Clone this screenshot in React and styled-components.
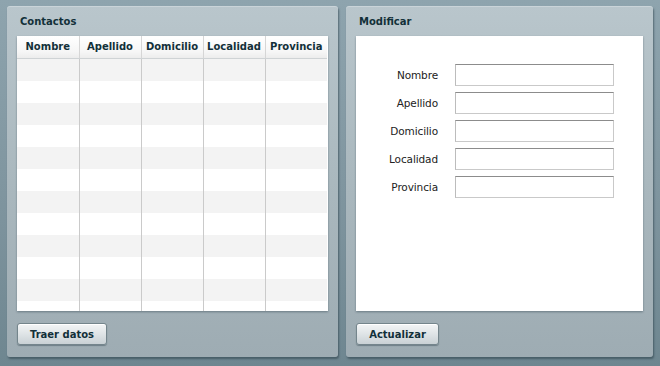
import React from "react";
import styled, { createGlobalStyle } from "styled-components";

const Global = createGlobalStyle`
  html, body { margin: 0; padding: 0; }
  body {
    width: 660px;
    height: 366px;
    overflow: hidden;
    font-family: "DejaVu Sans", Verdana, sans-serif;
    background: linear-gradient(180deg, #8ea4ae 0%, #7d939d 60%, #6e8690 100%);
  }
`;

const Page = styled.div`
  display: flex;
  gap: 8px;
  padding: 6px 7px 9px 7px;
  height: 366px;
  box-sizing: border-box;
`;

const Panel = styled.section`
  width: ${(p) => p.$w}px;
  height: 351px;
  box-sizing: border-box;
  border-radius: 3px;
  background: linear-gradient(180deg, #b9c6cc 0%, #aab8be 50%, #9eacb3 100%);
  box-shadow: 1px 2px 2px rgba(40, 60, 70, 0.55), inset 0 1px 0 rgba(255,255,255,0.25);
  display: flex;
  flex-direction: column;
  padding: 0 10px;
`;

const Title = styled.h2`
  margin: 0;
  height: 30px;
  display: flex;
  align-items: center;
  padding-left: 3px;
  font-size: 10px;
  font-weight: bold;
  color: #123039;
`;

const TableWrap = styled.div`
  height: 275px;
  background: #fff;
  overflow: hidden;
  box-shadow: 0 1px 2px rgba(40, 60, 70, 0.45);
`;

const Table = styled.table`
  border-collapse: collapse;
  table-layout: fixed;
  width: 310px;
`;

const Th = styled.th`
  width: 62px;
  height: 22px;
  padding: 0;
  box-sizing: border-box;
  font-size: 10px;
  font-weight: bold;
  color: #123039;
  text-align: center;
  background: linear-gradient(180deg, #ffffff 0%, #f6f6f6 70%, #ececec 100%);
  border-bottom: 1px solid #cfd3d5;
  border-left: 1px solid #d6d6d6;
  &:first-child { border-left: none; }
`;

const Row = styled.tr`
  background: ${(p) => (p.$odd ? "#ffffff" : "#f3f3f3")};
`;

const Td = styled.td`
  height: 22px;
  padding: 0;
  border-left: 1px solid #cacaca;
  &:first-child { border-left: none; }
`;

const Footer = styled.div`
  display: flex;
  padding-top: 12px;
`;

const Button = styled.button`
  height: 22px;
  width: ${(p) => p.$w}px;
  padding: 0;
  border: 1px solid #74858c;
  border-radius: 3px;
  background: linear-gradient(180deg, #f3f5f6 0%, #e1e6e8 45%, #c9d1d5 100%);
  box-shadow: 0 1px 1px rgba(40, 60, 70, 0.4), inset 0 1px 0 #fff;
  font-family: "DejaVu Sans", Verdana, sans-serif;
  font-size: 10px;
  font-weight: bold;
  color: #123039;
  cursor: pointer;
`;

const FormBox = styled.div`
  height: 275px;
  background: #fff;
  box-shadow: 0 1px 2px rgba(40, 60, 70, 0.45);
  box-sizing: border-box;
  padding-top: 28px;
`;

const Form = styled.div`
  display: grid;
  grid-template-columns: 82px 159px;
  column-gap: 17px;
  row-gap: 6px;
  align-items: center;
`;

const Label = styled.label`
  font-size: 10.5px;
  color: #222;
  text-align: right;
  letter-spacing: -0.1px;
`;

const Input = styled.input`
  height: 22px;
  box-sizing: border-box;
  border: 1px solid #c9c9c9;
  border-top-color: #8c8c8c;
  border-left-color: #bcbcbc;
  padding: 0 3px;
  background: #fff;
  font-family: "DejaVu Sans", Verdana, sans-serif;
  font-size: 10px;
  outline: none;
`;

const cols = ["Nombre", "Apellido", "Domicilio", "Localidad", "Provincia"];

export default function App() {
  const rows = Array.from({ length: 12 }, (_, i) => i);
  return (
    <>
      <Global />
      <Page>
        <Panel $w={331}>
          <Title>Contactos</Title>
          <TableWrap>
            <Table>
              <thead>
                <tr>
                  {cols.map((c) => (
                    <Th key={c}>{c}</Th>
                  ))}
                </tr>
              </thead>
              <tbody>
                {rows.map((r) => (
                  <Row key={r} $odd={r % 2 === 1}>
                    {cols.map((c) => (
                      <Td key={c} />
                    ))}
                  </Row>
                ))}
              </tbody>
            </Table>
          </TableWrap>
          <Footer>
            <Button $w={90}>Traer datos</Button>
          </Footer>
        </Panel>
        <Panel $w={307}>
          <Title>Modificar</Title>
          <FormBox>
            <Form>
              {cols.map((c) => (
                <React.Fragment key={c}>
                  <Label>{c}</Label>
                  <Input aria-label={c} />
                </React.Fragment>
              ))}
            </Form>
          </FormBox>
          <Footer>
            <Button $w={83}>Actualizar</Button>
          </Footer>
        </Panel>
      </Page>
    </>
  );
}
